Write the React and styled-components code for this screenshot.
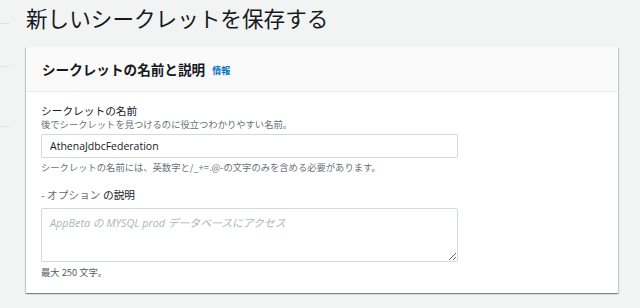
import React from "react";
import styled, { createGlobalStyle } from "styled-components";

const GlobalStyle = createGlobalStyle`
  html, body {
    margin: 0;
    padding: 0;
    background: #f2f3f3;
  }
  body {
    font-family: "Open Sans", "Noto Sans CJK JP", sans-serif;
    color: #16191f;
  }
`;

const Page = styled.div`
  display: flex;
  width: 640px;
  height: 308px;
  overflow: hidden;
`;

const Nav = styled.div`
  width: 10px;
  flex-shrink: 0;
  display: flex;
  flex-direction: column;
`;

const NavLine = styled.div`
  height: 1px;
  background: #e1e4e4;
  margin-top: ${({ $gap }) => $gap}px;
`;

const Main = styled.div`
  padding-left: 16px;
  display: flex;
  flex-direction: column;
`;

const Title = styled.h1`
  margin: 0;
  font-family: "Noto Sans CJK JP", sans-serif;
  font-size: 21.6px;
  font-weight: 400;
  line-height: 36px;
  color: #16191f;
`;

const Card = styled.section`
  margin-top: 11px;
  width: 592px;
  background: #fff;
  box-shadow: 0 1px 1px 0 rgba(0, 28, 36, 0.3), 1px 1px 1px 0 rgba(0, 28, 36, 0.15),
    -1px 1px 1px 0 rgba(0, 28, 36, 0.15);
`;

const CardHeader = styled.header`
  height: 45px;
  box-sizing: border-box;
  padding: 0 16px;
  display: flex;
  align-items: center;
  gap: 7px;
  background: #fafafa;
  border-bottom: 1px solid #eaeded;
`;

const HeaderTitle = styled.h2`
  margin: 0;
  font-family: "Noto Sans CJK JP", sans-serif;
  font-size: 13.6px;
  font-weight: 700;
  color: #16191f;
`;

const InfoLink = styled.a`
  font-family: "Noto Sans CJK JP", sans-serif;
  font-size: 9px;
  font-weight: 700;
  color: #0073bb;
  margin-top: 2px;
`;

const CardBody = styled.div`
  padding: 12px 15px 15px;
  display: flex;
  flex-direction: column;
`;

const Label = styled.div`
  font-family: "Noto Sans CJK JP", sans-serif;
  font-size: 10.7px;
  line-height: 14px;
  color: #16191f;
  margin-top: ${({ $top }) => $top || 0}px;
`;

const Optional = styled.span`
  color: #687078;
`;

const Hint = styled.div`
  font-family: "Noto Sans CJK JP", sans-serif;
  font-size: 9.3px;
  line-height: 12px;
  color: ${({ $dark }) => ($dark ? "#545b64" : "#687078")};
  margin-top: ${({ $top }) => $top || 0}px;
`;

const Input = styled.input`
  margin-top: 4px;
  width: 417px;
  height: 24px;
  box-sizing: border-box;
  border: 1px solid #d3dada;
  border-radius: 2px;
  padding: 0 8px;
  font-family: "Open Sans", "Noto Sans CJK JP", sans-serif;
  font-size: 10.5px;
  color: #16191f;
  outline: none;
`;

const TextArea = styled.textarea`
  margin-top: 6px;
  width: 417px;
  height: 54px;
  box-sizing: border-box;
  border: 1px solid #d3dada;
  border-radius: 2px;
  padding: 5px 8px;
  font-family: "Open Sans", "Noto Sans CJK JP", sans-serif;
  font-size: 10.8px;
  outline: none;
  &::placeholder {
    color: #aab7b8;
    font-style: italic;
  }
`;

export default function App() {
  return (
    <>
      <GlobalStyle />
      <Page>
        <Nav>
          <NavLine $gap={23} />
          <NavLine $gap={42} />
          <NavLine $gap={59} />
        </Nav>
        <Main>
          <Title>新しいシークレットを保存する</Title>
          <Card>
            <CardHeader>
              <HeaderTitle>シークレットの名前と説明</HeaderTitle>
              <InfoLink>情報</InfoLink>
            </CardHeader>
            <CardBody>
              <Label>シークレットの名前</Label>
              <Hint>後でシークレットを見つけるのに役立つわかりやすい名前。</Hint>
              <Input defaultValue="AthenaJdbcFederation" />
              <Hint $top={3}>
                シークレットの名前には、英数字と/_+=.@-の文字のみを含める必要があります。
              </Hint>
              <Label $top={15}>
                <Optional>- オプション</Optional> の説明
              </Label>
              <TextArea placeholder="AppBeta の MYSQL prod データベースにアクセス" />
              <Hint $top={4} $dark>
                最大 250 文字。
              </Hint>
            </CardBody>
          </Card>
        </Main>
      </Page>
    </>
  );
}
